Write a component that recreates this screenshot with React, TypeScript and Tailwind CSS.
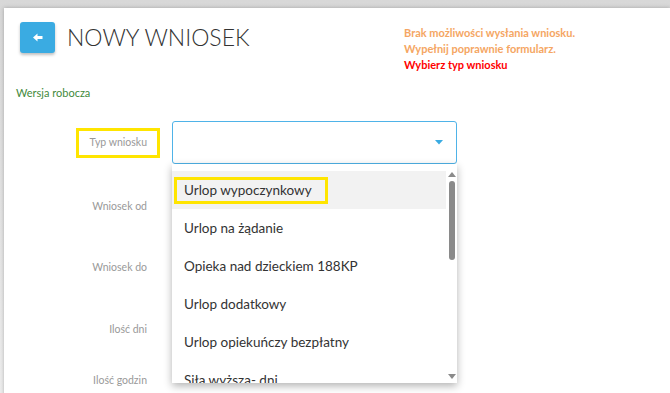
import React from "react";

const rows = [
  { label: "Wniosek od", mt: "mt-[21px]" },
  { label: "Wniosek do", mt: "mt-[18px]" },
  { label: "Ilość dni", mt: "mt-[19px]" },
  { label: "Ilość godzin", mt: "mt-[8px]" },
];

const options = [
  "Urlop wypoczynkowy",
  "Urlop na żądanie",
  "Opieka nad dzieckiem 188KP",
  "Urlop dodatkowy",
  "Urlop opiekuńczy bezpłatny",
  "Siła wyższa- dni",
];

const App = () => {
  return (
    <div className="w-[670px] h-[393px] overflow-hidden bg-gradient-to-b from-[#d8d8d8] to-[#eeeeee] font-['Lato','Open_Sans',sans-serif]">
      <div className="ml-[4px] mt-[8px] h-[400px] bg-white shadow-[0_0_4px_rgba(0,0,0,0.25)] pl-[12px] pt-[14px] relative">
        {/* naglowek */}
        <div className="flex">
          <div className="flex items-start w-[388px]">
            <button className="ml-[4px] w-[35px] h-[31px] rounded-[3px] bg-[#3aabe2] shadow-[0_2px_3px_rgba(0,0,0,0.25)] flex items-center justify-center">
              <svg width="10" height="9" viewBox="0 0 10 9">
                <path d="M0 4.5 L4.5 0.5 L4.5 3 L9.5 3 L9.5 6 L4.5 6 L4.5 8.5 Z" fill="#fff" />
              </svg>
            </button>
            <h1 className="ml-[12px] -mt-[1px] text-[23px] leading-[32px] font-light text-[#333]">
              NOWY WNIOSEK
            </h1>
          </div>
          <div className="text-[11px] leading-[16px] font-bold pt-[3px]">
            <p className="text-[#f5a663]">Brak możliwości wysłania wniosku.</p>
            <p className="text-[#f5a663]">Wypełnij poprawnie formularz.</p>
            <p className="text-[#f00]">Wybierz typ wniosku</p>
          </div>
        </div>

        <p className="mt-[12px] text-[11px] leading-[16px] text-[#3f8a3b]">Wersja robocza</p>

        {/* formularz */}
        <div className="mt-[20px] relative">
          <div className="flex items-center h-[43px]">
            <div className="w-[144px] flex justify-end">
              <span className="border-[3px] border-[#ffe500] h-[30px] pl-[11px] pr-[10px] flex items-center text-[10.5px] text-[#999]">
                Typ wniosku
              </span>
            </div>
            <div className="ml-[12px] w-[285px] h-[43px] border border-[#4fb3e8] rounded-[3px] flex items-center justify-end pr-[13px]">
              <svg width="8" height="5" viewBox="0 0 8 5">
                <path d="M0 0 L8 0 L4 4.5 Z" fill="#3aabe2" />
              </svg>
            </div>
          </div>
          {rows.map((r) => (
            <div key={r.label} className={`flex items-center h-[43px] ${r.mt}`}>
              <div className="w-[144px] flex justify-end pr-[13px] text-[10.5px] text-[#999]">
                {r.label}
              </div>
            </div>
          ))}

          {/* lista rozwijana */}
          <div className="absolute left-[156px] top-[43px] w-[285px] h-[219px] bg-white shadow-[0_3px_8px_rgba(0,0,0,0.3)] flex overflow-hidden">
            <div className="flex-1 pt-[7px]">
              {options.map((o, i) => (
                <div
                  key={o}
                  className={`h-[38px] flex items-center pl-[12px] text-[13.5px] text-[#333] whitespace-nowrap ${
                    i === 0 ? "bg-[#f2f2f2]" : ""
                  }`}
                >
                  {i === 0 ? (
                    <span className="-ml-[10px] border-[3px] border-[#ffe500] h-[27px] pl-[7px] pr-[13px] flex items-center">
                      {o}
                    </span>
                  ) : (
                    o
                  )}
                </div>
              ))}
            </div>
            <div className="w-[11px] flex flex-col items-center pt-[8px] pb-[4px]">
              <svg width="8" height="5" viewBox="0 0 8 5">
                <path d="M0 5 L8 5 L4 0 Z" fill="#8a8a8a" />
              </svg>
              <div className="mt-[4px] w-[6px] h-[79px] rounded-[3px] bg-[#8a8a8a]" />
              <div className="flex-1" />
              <svg width="8" height="5" viewBox="0 0 8 5">
                <path d="M0 0 L8 0 L4 5 Z" fill="#8a8a8a" />
              </svg>
            </div>
          </div>
        </div>
      </div>
    </div>
  );
};

export default App;
